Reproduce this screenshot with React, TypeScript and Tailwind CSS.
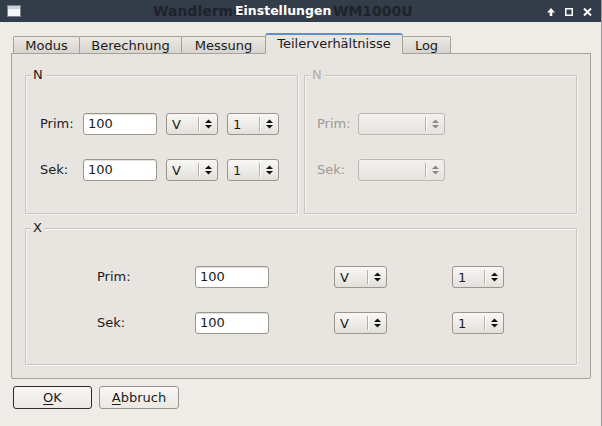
import React from 'react';

// Qt-style "Einstellungen" dialog, Teilerverhältnisse tab active.

const TABS = [
  { label: 'Modus', w: 'w-[67px]' },
  { label: 'Berechnung', w: 'w-[103px]' },
  { label: 'Messung', w: 'w-[85px]' },
  { label: 'Teilerverhältnisse', w: 'w-[138px]', active: true },
  { label: 'Log', w: 'w-[49px]' },
];

function Arrows({ disabled }: { disabled?: boolean }) {
  const fill = disabled ? '#8d8a86' : '#111';
  return (
    <svg width="7" height="10" viewBox="0 0 7 10">
      <polygon points="0,4 3.5,0.5 7,4" fill={fill} />
      <polygon points="0,6 3.5,9.5 7,6" fill={fill} />
    </svg>
  );
}

function Combo({ value, w, disabled }: { value?: string; w: string; disabled?: boolean }) {
  return (
    <div
      className={`${w} h-[22px] shrink-0 rounded-[3px] border flex items-center ${
        disabled
          ? 'border-[#bcb8b2] bg-gradient-to-b from-[#f3f1ee] to-[#e6e3df]'
          : 'border-[#9a968f] bg-gradient-to-b from-[#f9f8f6] to-[#e3e0db]'
      }`}
    >
      <span className="flex-1 pl-[5px] leading-none">{value}</span>
      <span className="w-px h-[14px] bg-[#b3afa9] shadow-[1px_0_0_#ffffff]" />
      <span className="w-[18px] flex justify-center">
        <Arrows disabled={disabled} />
      </span>
    </div>
  );
}

function Input({ value }: { value: string }) {
  return (
    <div className="w-[74px] h-[22px] shrink-0 rounded-[3px] border border-[#9a968f] bg-white flex items-center pl-[4px] shadow-[inset_0_1px_0_#e4e2de]">
      {value}
    </div>
  );
}

function Group({
  title,
  disabled,
  className,
  children,
}: {
  title: string;
  disabled?: boolean;
  className: string;
  children: React.ReactNode;
}) {
  return (
    <div
      className={`relative border border-[#c9c5c0] rounded-[1px] shadow-[inset_1px_1px_0_#f7f5f2,1px_1px_0_#f7f5f2] ${className}`}
    >
      <span
        className={`absolute -top-[9px] left-[5px] px-[2px] bg-[#e8e4e0] leading-[15px] ${
          disabled ? 'text-[#b0aca7]' : ''
        }`}
      >
        {title}
      </span>
      {children}
    </div>
  );
}

export default function App() {
  return (
    <div className="w-[602px] h-[426px] flex flex-col bg-[#efebe7] text-[13px] text-[#1b1b1b] border-r border-[#9c9c9c] font-['DejaVu_Sans',sans-serif] overflow-hidden">
      {/* title bar; the dim text is the parent window's title showing through */}
      <div className="relative h-[22px] shrink-0 bg-[#333c49] flex items-center pl-[235px]">
        <div className="absolute left-[7px] top-[5px] w-[14px] h-[12px] border border-[#7d8590] bg-[#f4f5f7]">
          <div className="h-[3px] bg-[#c9d1dc]" />
        </div>
        <span className="absolute left-[153px] top-[3px] font-bold text-[14px] leading-[16px] text-[#1d232c]">
          Wandlerme
        </span>
        <span className="absolute left-[333px] top-[3px] font-bold text-[14px] leading-[16px] text-[#1d232c]">
          WM1000U
        </span>
        <span className="relative font-bold text-[12.5px] text-white leading-[16px]">Einstellungen</span>
        <div className="absolute right-[9px] top-[8px] flex items-center gap-[10px]">
          <svg width="8" height="8" viewBox="0 0 8 8">
            <path d="M4 0 L8 4.5 L5.3 4.5 L5.3 8 L2.7 8 L2.7 4.5 L0 4.5 Z" fill="#fff" />
          </svg>
          <svg width="8" height="8" viewBox="0 0 8 8">
            <rect x="0.75" y="0.75" width="6.5" height="6.5" fill="none" stroke="#fff" strokeWidth="1.5" />
          </svg>
          <svg width="9" height="8" viewBox="0 0 9 8">
            <path d="M1 0.5 L8 7.5 M8 0.5 L1 7.5" stroke="#fff" strokeWidth="2" />
          </svg>
        </div>
      </div>

      <div className="flex-1 flex flex-col pl-[11px] pr-[10px]">
        {/* tabs */}
        <div className="mt-[11px] h-[20px] flex items-end pl-[2px]">
          {TABS.map((t, i) =>
            t.active ? (
              <div
                key={t.label}
                className={`${t.w} ${i ? '-ml-px' : ''} relative z-10 -mb-px h-[21px] rounded-t-[3px] border border-b-0 border-[#a5a19c] border-t-2 border-t-[#5f8fc6] bg-[#e8e4e0] flex items-center justify-center pb-[1px]`}
              >
                {t.label}
              </div>
            ) : (
              <div
                key={t.label}
                className={`${t.w} ${i ? '-ml-px' : ''} h-[17px] rounded-t-[2px] border border-b-0 border-[#a5a19c] bg-gradient-to-b from-[#ece9e5] to-[#d7d3ce] flex items-center justify-center pt-[1px]`}
              >
                {t.label}
              </div>
            ),
          )}
        </div>

        {/* pane */}
        <div className="h-[326px] border border-[#a5a19c] rounded-b-[2px] bg-[#e8e4e0] pt-[21px] px-[13px] flex flex-col">
          <div className="grid grid-cols-2 gap-[6px]">
            <Group title="N" className="h-[139px] pt-[37px] pl-[14px] flex flex-col gap-[24px]">
              {['Prim:', 'Sek:'].map((l) => (
                <div key={l} className="flex items-center h-[22px]">
                  <span className="w-[43px] shrink-0">{l}</span>
                  <Input value="100" />
                  <div className="ml-[9px]">
                    <Combo value="V" w="w-[52px]" />
                  </div>
                  <div className="ml-[9px]">
                    <Combo value="1" w="w-[52px]" />
                  </div>
                </div>
              ))}
            </Group>
            <Group title="N" disabled className="h-[139px] pt-[37px] pl-[12px] flex flex-col gap-[24px]">
              {['Prim:', 'Sek:'].map((l) => (
                <div key={l} className="flex items-center h-[22px] text-[#9e9a95]">
                  <span className="w-[41px] shrink-0">{l}</span>
                  <Combo w="w-[87px]" disabled />
                </div>
              ))}
            </Group>
          </div>

          <Group title="X" className="mt-[14px] h-[137px] pt-[37px] pl-[71px] flex flex-col gap-[24px]">
            {['Prim:', 'Sek:'].map((l) => (
              <div key={l} className="flex items-center h-[22px]">
                <span className="w-[98px] shrink-0">{l}</span>
                <Input value="100" />
                <div className="ml-[65px]">
                  <Combo value="V" w="w-[53px]" />
                </div>
                <div className="ml-[65px]">
                  <Combo value="1" w="w-[52px]" />
                </div>
              </div>
            ))}
          </Group>
        </div>

        {/* buttons */}
        <div className="mt-[7px] flex gap-[7px] pl-[2px]">
          <button className="w-[79px] h-[23px] rounded-[3px] border border-[#2b2b2b] bg-gradient-to-b from-[#f8f7f5] to-[#ebe8e4] leading-none">
            <span className="underline underline-offset-[2px]">O</span>K
          </button>
          <button className="w-[80px] h-[23px] rounded-[3px] border border-[#9a968f] bg-gradient-to-b from-[#f8f7f5] to-[#ebe8e4] leading-none">
            <span className="underline underline-offset-[2px]">A</span>bbruch
          </button>
        </div>
      </div>
    </div>
  );
}
